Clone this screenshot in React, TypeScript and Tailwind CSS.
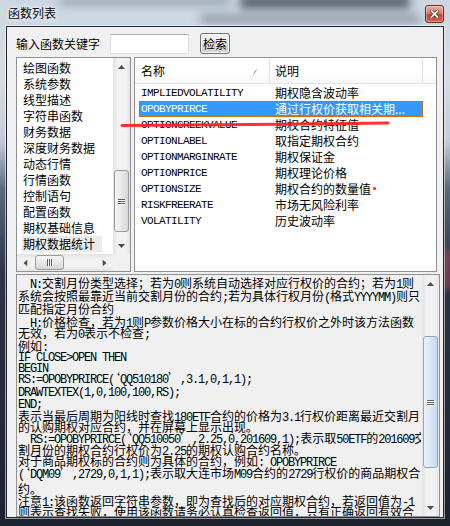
import React from 'react'

const leftItems = [
  '绘图函数',
  '系统参数',
  '线型描述',
  '字符串函数',
  '财务数据',
  '深度财务数据',
  '动态行情',
  '行情函数',
  '控制语句',
  '配置函数',
  '期权基础信息',
  '期权数据统计',
]

const rows = [
  ['IMPLIEDVOLATILITY', '期权隐含波动率'],
  ['OPOBYPRIRCE', '通过行权价获取相关期...'],
  ['OPTIONGREEKVALUE', '期权合约特征值'],
  ['OPTIONLABEL', '取指定期权合约'],
  ['OPTIONMARGINRATE', '期权保证金'],
  ['OPTIONPRICE', '期权理论价格'],
  ['OPTIONSIZE', '期权合约的数量值'],
  ['RISKFREERATE', '市场无风险利率'],
  ['VOLATILITY', '历史波动率'],
]

// each line with the spacing to the next one (the rich edit packs them unevenly)
const lines: [string, string][] = [
  ['　N:交割月份类型选择；若为0则系统自动选择对应行权价的合约；若为1则', 'h-[13px]'],
  ['系统会按照最靠近当前交割月份的合约;若为具体行权月份(格式YYYYMM)则只', 'h-[13px]'],
  ['匹配指定月份合约', 'h-[13px]'],
  ['　H:价格检查，若为1则P参数价格大小在标的合约行权价之外时该方法函数', 'h-[11px]'],
  ['无效，若为0表示不检查;', 'h-[13px]'],
  ['例如:', 'h-[10px]'],
  ['IF CLOSE>OPEN THEN', 'h-[11px]'],
  ['BEGIN', 'h-[11px]'],
  ['RS:=OPOBYPRIRCE(‘QQ510180’,3.1,0,1,1);', 'h-[13px]'],
  ['DRAWTEXTEX(1,0,100,100,RS);', 'h-[12px]'],
  ['END;', 'h-[13px]'],
  ['表示当最后周期为阳线时查找180ETF合约的价格为3.1行权价距离最近交割月', 'h-[11px]'],
  ['的认购期权对应合约，并在屏幕上显示出现。', 'h-[11px]'],
  ['　RS:=OPOBYPRIRCE(‘QQ510050’,2.25,0,201609,1);表示取50ETF的201609交', 'h-[12px]'],
  ['割月份的期权合约行权价为2.25的期权认购合约名称。', 'h-[11px]'],
  ['对于商品期权标的合约则为具体的合约，例如: OPOBYPRIRCE', 'h-[12px]'],
  ['(‘DQM09’,2729,0,1,1);表示取大连市场M09合约的2729行权价的商品期权合', 'h-[16px]'],
  ['约。', 'h-[12px]'],
  ['注意1:该函数返回字符串参数，即为查找后的对应期权合约，若返回值为-1', 'h-[11px]'],
  ['则表示查找失败，使用该函数请务必认真检查返回值，只有正确返回有效合', 'h-[12px]'],
]

// half-width runs get a 6px-per-char mono face, like the bitmap font in the original
function Mixed({ text }: { text: string }) {
  const parts = text.split(/([\x20-\x7e]+)/)
  return (
    <>
      {parts.map((p, i) =>
        /^[\x20-\x7e]+$/.test(p) ? (
          <span key={i} className="font-['Liberation_Mono',monospace] text-[12px] tracking-[-1.2px]">
            {p}
          </span>
        ) : (
          <span key={i}>{p}</span>
        )
      )}
    </>
  )
}

function Arrow({ dir }: { dir: 'up' | 'down' | 'left' | 'right' }) {
  const rot = { up: '', down: 'rotate-180', left: '-rotate-90', right: 'rotate-90' }[dir]
  return (
    <svg width="7" height="4" viewBox="0 0 7 4" className={rot}>
      <path d="M0 4 L3.5 0 L7 4 Z" fill="#4b4b4b" />
    </svg>
  )
}

function VScroll({ gap, thumb, blue }: { gap: string; thumb: string; blue?: boolean }) {
  return (
    <div className="w-[17px] flex flex-col shrink-0 bg-[linear-gradient(90deg,#e3e3e3,#f2f2f2_30%,#f2f2f2_70%,#e6e6e6)]">
      <div className="h-[17px] flex items-center justify-center">
        <Arrow dir="up" />
      </div>
      <div className={gap} />
      <div
        className={`${thumb} mx-[1px] rounded-[3px] border flex flex-col items-center justify-center gap-[1px] ${
          blue
            ? 'border-[#8fa6c1] bg-[linear-gradient(90deg,#eaf2fb,#d9e7f5_50%,#c6daee)]'
            : 'border-[#9b9b9b] bg-[linear-gradient(90deg,#f6f6f6,#e8e8e8_50%,#d6d6d6)]'
        }`}
      >
        <div className="w-[7px] h-[1px] bg-[#5e5e5e] shadow-[0_1px_0_#ffffff]" />
        <div className="w-[7px] h-[1px] bg-[#5e5e5e] shadow-[0_1px_0_#ffffff]" />
        <div className="w-[7px] h-[1px] bg-[#5e5e5e] shadow-[0_1px_0_#ffffff]" />
      </div>
      <div className="flex-1" />
      <div className="h-[17px] flex items-center justify-center">
        <Arrow dir="down" />
      </div>
    </div>
  )
}

function HScroll() {
  return (
    <div className="h-[17px] flex bg-[linear-gradient(180deg,#e3e3e3,#f2f2f2_30%,#f2f2f2_70%,#e6e6e6)]">
      <div className="w-[17px] flex items-center justify-center">
        <Arrow dir="left" />
      </div>
      <div className="w-[1px]" />
      <div className="w-[29px] my-[1px] rounded-[3px] border border-[#9b9b9b] bg-[linear-gradient(180deg,#f6f6f6,#e8e8e8_50%,#d6d6d6)] flex items-center justify-center gap-[1px]">
        <div className="w-[1px] h-[7px] bg-[#5e5e5e] shadow-[1px_0_0_#ffffff]" />
        <div className="w-[1px] h-[7px] bg-[#5e5e5e] shadow-[1px_0_0_#ffffff]" />
        <div className="w-[1px] h-[7px] bg-[#5e5e5e] shadow-[1px_0_0_#ffffff]" />
      </div>
      <div className="flex-1" />
      <div className="w-[17px] flex items-center justify-center">
        <Arrow dir="right" />
      </div>
    </div>
  )
}

export default function App() {
  return (
    <div className="relative w-[450px] h-[526px] overflow-hidden flex flex-col font-['Noto_Sans_CJK_SC',sans-serif] text-[12px] text-black bg-[linear-gradient(180deg,#cbd6e1_0%,#d6dee6_14%,#c2ccd6_27%,#5a687c_36%,#2b3545_52%,#1c232d_100%)]">
      {/* blurry glass behind the caption */}
      <div className="absolute left-[60px] top-[-4px] w-[170px] h-[10px] bg-[#8a97a5] blur-[5px] opacity-70" />
      <div className="absolute left-[240px] top-[-5px] w-[170px] h-[14px] bg-[#3f4752] blur-[5px] opacity-80" />
      <div className="absolute left-[200px] top-[14px] w-[220px] h-[10px] bg-[#6f7a86] blur-[5px] opacity-60" />
      <div className="absolute right-0 top-[250px] w-[6px] h-[40px] bg-[#b04a5c] blur-[3px] opacity-80" />

      {/* caption */}
      <div className="relative h-[26px] flex items-start pl-[8px] pr-[6px]">
        <span className="mt-[5px] leading-[16px] [text-shadow:0_0_6px_#ffffff,0_0_3px_#ffffff]">函数列表</span>
        <div className="ml-auto mt-[5px] w-[19px] h-[18px] rounded-[3px] border border-[#6e2a1f] bg-[linear-gradient(180deg,#eab0a2,#d77d68_45%,#c4452f_55%,#d2664d)] shadow-[inset_0_0_0_1px_rgba(255,255,255,0.35)] flex items-center justify-center">
          <svg width="9" height="8" viewBox="0 0 9 8">
            <path d="M1.5 1 L7.5 7 M7.5 1 L1.5 7" stroke="#4a1a12" strokeWidth="3.2" strokeLinecap="square" />
            <path d="M1.5 1 L7.5 7 M7.5 1 L1.5 7" stroke="#ffffff" strokeWidth="1.8" strokeLinecap="square" />
          </svg>
        </div>
      </div>

      {/* client */}
      <div className="relative mx-[6px] h-[492px] border border-[#22272e] bg-[#f0f0f0] shadow-[0_0_0_1px_rgba(255,255,255,0.55)] flex flex-col pt-[6px] pl-[9px]">
        <div className="flex items-center h-[21px]">
          <span className="w-[94px] leading-[16px]">输入函数关键字</span>
          <div className="w-[79px] h-[20px] bg-white border border-[#dbdfe6] border-t-[#abadb3]" />
          <button className="ml-[11px] w-[30px] h-[21px] rounded-[3px] border border-[#707070] bg-[linear-gradient(180deg,#f2f2f2,#ebebeb_50%,#dddddd_50%,#cfcfcf)] shadow-[inset_0_0_0_1px_#fcfcfc] text-[12px] leading-[16px] flex items-center justify-center">
            检索
          </button>
        </div>

        <div className="flex gap-[3px] mt-[3px] h-[215px]">
          {/* category list */}
          <div className="w-[115px] border border-[#8e9197] bg-white flex flex-col">
            <div className="flex flex-1">
              <div className="flex-1 pt-[2px] overflow-hidden">
                {leftItems.map((t, i) => (
                  <div key={t} className="h-[16px] pl-[5px] leading-[16px] whitespace-nowrap">
                    <span className={`inline-block w-[80px] pl-[1px] ${i === leftItems.length - 1 ? 'bg-[#ebebeb]' : ''}`}>{t}</span>
                  </div>
                ))}
              </div>
              <VScroll gap="h-[95px]" thumb="h-[62px]" />
            </div>
            <div className="flex">
              <div className="flex-1">
                <HScroll />
              </div>
              <div className="w-[17px] h-[17px] bg-[#f0f0f0]" />
            </div>
          </div>

          {/* function list */}
          <div className="w-[303px] border border-[#8e9197] bg-white flex flex-col overflow-hidden">
            <div className="mt-[1px] h-[25px] flex border-b border-[#e2e3e5] bg-[linear-gradient(180deg,#ffffff,#ffffff_50%,#f6f7f8)] leading-[16px]">
              <div className="relative w-[135px] pl-[6px] flex items-center border-r border-[#e1e2e4]">
                名称
                <svg className="absolute left-[118px] top-[10px]" width="4" height="6" viewBox="0 0 4 6">
                  <path d="M0.5 5.5 L3.5 0.5" stroke="#9a9a9a" strokeWidth="1" />
                </svg>
              </div>
              <div className="w-[153px] pl-[5px] flex items-center border-r border-[#e1e2e4]">说明</div>
            </div>
            <div className="pl-[4px] pt-[1px]">
              {rows.map(([name, desc], i) => (
                <div
                  key={name}
                  className={`h-[16px] w-[284px] flex items-center leading-[14px] ${
                    i === 1 ? 'bg-[#3399ff] text-white border border-dotted border-[#cc6600]' : 'border border-transparent'
                  }`}
                >
                  <span className="w-[134px] pl-[1px] font-['Liberation_Mono',monospace] text-[11px] tracking-[-0.6px]">{name}</span>
                  <span className="pl-[1px] whitespace-nowrap">{desc}</span>
                </div>
              ))}
            </div>
          </div>
        </div>

        {/* help text */}
        <div className="mt-[2px] w-[424px] h-[243px] border border-[#8e9197] bg-[#f0f0f0] flex">
          <div className="w-[405px] pl-[1px] pt-[2px] overflow-hidden">
            {lines.map(([t, h], i) => (
              <div key={i} className={`${h} leading-[12px] whitespace-pre`}>
                <Mixed text={t} />
              </div>
            ))}
          </div>
          <div className="w-[1px]" />
          <VScroll gap="h-[44px]" thumb="h-[132px]" blue />
        </div>
      </div>

      {/* hand-drawn marks on the screenshot */}
      <svg className="absolute left-0 top-0 pointer-events-none" width="450" height="526" viewBox="0 0 450 526">
        <path d="M122 125.5 L250 124.5 L388 123" stroke="#ff1f1f" strokeWidth="3" strokeLinecap="round" fill="none" opacity="0.92" />
        <circle cx="374.5" cy="188.5" r="1.6" fill="#ff2a2a" />
      </svg>
    </div>
  )
}
